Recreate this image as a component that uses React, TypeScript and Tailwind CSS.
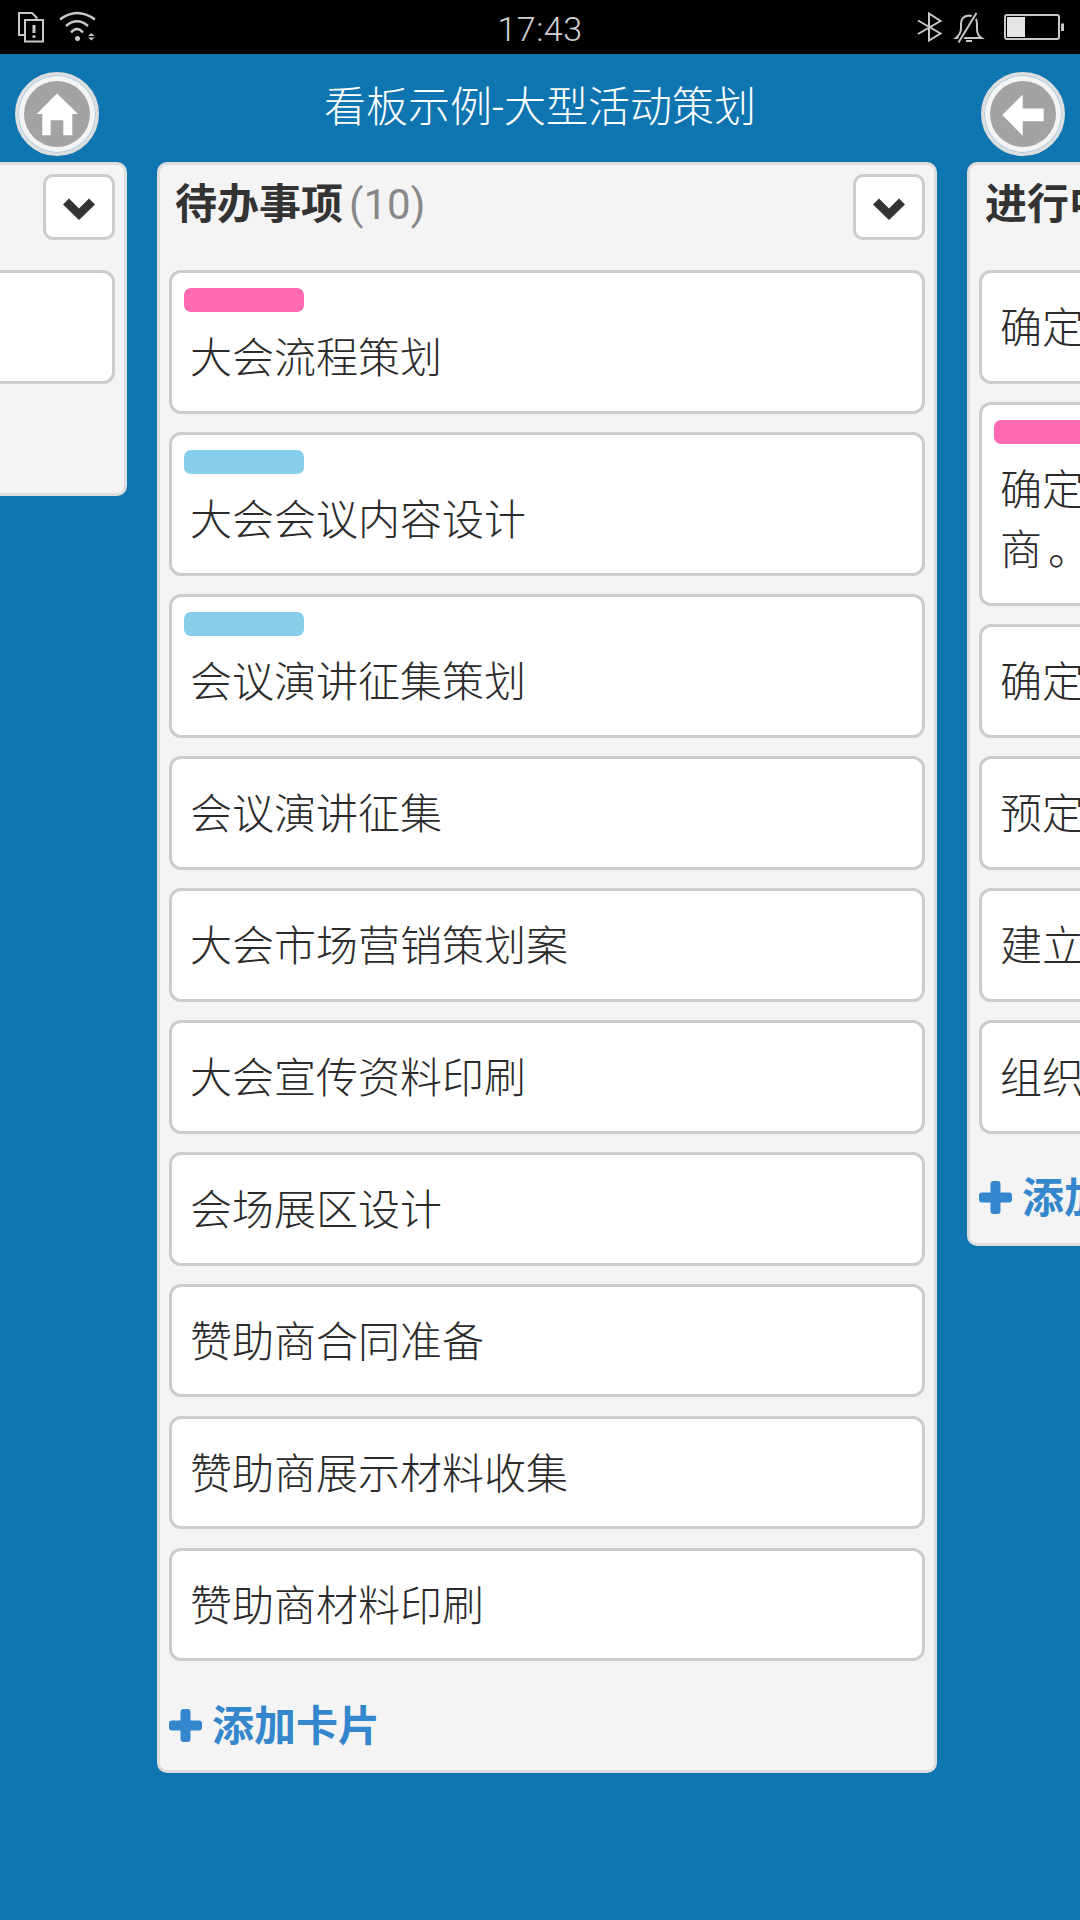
import React from "react";

type CardData = { text?: string; tail?: string; label?: "pink" | "blue" };

const leftCards: CardData[] = [{}];

const midCards: CardData[] = [
  { text: "大会流程策划", label: "pink" },
  { text: "大会会议内容设计", label: "blue" },
  { text: "会议演讲征集策划", label: "blue" },
  { text: "会议演讲征集" },
  { text: "大会市场营销策划案" },
  { text: "大会宣传资料印刷" },
  { text: "会场展区设计" },
  { text: "赞助商合同准备" },
  { text: "赞助商展示材料收集" },
  { text: "赞助商材料印刷" },
];

const rightCards: CardData[] = [
  { text: "确定大会主题" },
  { text: "确定大会场地和活动服务的合作供应商", tail: "。", label: "pink" },
  { text: "确定大会日程" },
  { text: "预定大会场地" },
  { text: "建立大会网站" },
  { text: "组织筹备团队" },
];

function Chevron() {
  return (
    <svg width="32" height="22" viewBox="0 0 32 22" className="mt-[4px] block">
      <path d="M0 6.5 L6 0.5 L16 10.5 L26 0.5 L32 6.5 L16 22 Z" fill="#333333" />
    </svg>
  );
}

function Plus() {
  return (
    <svg width="33" height="33" viewBox="0 0 33 33" className="block shrink-0">
      <path
        d="M11.5 3 Q11.5 0 14.5 0 H18.5 Q21.5 0 21.5 3 V11.5 H30 Q33 11.5 33 14.5 V18.5 Q33 21.5 30 21.5 H21.5 V30 Q21.5 33 18.5 33 H14.5 Q11.5 33 11.5 30 V21.5 H3 Q0 21.5 0 18.5 V14.5 Q0 11.5 3 11.5 H11.5 Z"
        fill="#3587cd"
      />
    </svg>
  );
}

function Card({ text, tail, label }: CardData) {
  return (
    <div
      className={
        "rounded-[12px] border-[3px] border-[#cccccc] bg-white px-[12px] text-[42px] font-light leading-[60px] text-[#2b2b2b] " +
        (label ? "pt-[15px] pb-[23.6px]" : "py-[23.8px]")
      }
    >
      {label && (
        <div
          className={
            "mb-[15px] h-[24px] w-[120px] rounded-[7px] " +
            (label === "pink" ? "bg-[#ff69b4]" : "bg-[#87ceeb]")
          }
        />
      )}
      <div className="min-h-[60px] px-[6px]">
        <div className="relative top-[2px]">
          {text}
          {tail && <span className="pl-[6px]">{tail}</span>}
        </div>
      </div>
    </div>
  );
}

function Column({
  title,
  count,
  cards,
}: {
  title?: string;
  count?: number;
  cards: CardData[];
}) {
  return (
    <div className="w-[780px] shrink-0 self-start rounded-[10px] border-[3px] border-[#dddddd] bg-[#f4f4f4]">
      <div className="flex h-[105px] items-start justify-between pl-[15px] pr-[9px] pt-[9px]">
        <div className="whitespace-nowrap text-[42px] leading-[62px] text-[#333333]">
          <span className="font-bold">{title}</span>
          {count !== undefined && (
            <span className="ml-[6px] text-[#888888]">({count})</span>
          )}
        </div>
        <div className="flex h-[66px] w-[72px] items-center justify-center rounded-[10px] border-[3px] border-[#cccccc] bg-white">
          <Chevron />
        </div>
      </div>
      <div className="flex flex-col gap-[18.4px] px-[9px]">
        {cards.map((c, i) => (
          <Card key={i} {...c} />
        ))}
      </div>
      <div className="mt-[34px] mb-[15px] flex h-[60px] items-center gap-[10px] px-[9px] text-[42px] font-bold text-[#3587cd]">
        <Plus />
        <span className="relative top-[1px]">添加卡片</span>
      </div>
    </div>
  );
}

function RoundButton({ children }: { children: React.ReactNode }) {
  return (
    <div className="flex h-[84px] w-[84px] items-center justify-center rounded-full border-[3px] border-[#dddddd] bg-[#f4f4f4] shadow-[inset_0_0_0_1px_#a9cbe0]">
      <div className="h-[66px] w-[66px] rounded-full bg-[#a3a3a3]">{children}</div>
    </div>
  );
}

function HomeGlyph() {
  return (
    <svg width="66" height="66" viewBox="0 0 66 66" className="block">
      <path
        fillRule="evenodd"
        d="M33 12.6 L54 33 H48.3 V54.3 H39.3 V39.3 H26.7 V54.3 H18.3 V33 H12.7 Z"
        fill="#ffffff"
      />
    </svg>
  );
}

function BackGlyph() {
  return (
    <svg width="66" height="66" viewBox="0 0 66 66" className="block">
      <path
        d="M12.4 34 L32.7 13.4 V27.5 H53.7 V40.3 H32.7 V54.7 Z"
        fill="#ffffff"
      />
    </svg>
  );
}

function StatusLeft() {
  return (
    <svg width="180" height="54" viewBox="0 0 180 54" className="block" fill="none">
      <path d="M24 35 H19 V13 H32 L36.5 17.5 V19" stroke="#c8c8c8" strokeWidth="2" />
      <rect x="25" y="20" width="18" height="21.5" stroke="#c8c8c8" strokeWidth="2" />
      <path d="M34 25 V33" stroke="#c8c8c8" strokeWidth="3" />
      <circle cx="34" cy="36.5" r="1.6" fill="#c8c8c8" />
      <path d="M60 19.5 Q77 6.5 95 19.5" stroke="#c8c8c8" strokeWidth="2.4" />
      <path d="M66 26 Q77 16.5 88 26" stroke="#c8c8c8" strokeWidth="2.4" />
      <path d="M71 32.5 Q77 25.5 83 32.5" stroke="#c8c8c8" strokeWidth="2.4" />
      <circle cx="77.5" cy="38.5" r="2.5" fill="#c8c8c8" />
      <path d="M88 36 L91.3 33 L94.6 36 Z" fill="#c8c8c8" />
      <path d="M88 37.5 H94.6 L91.3 40.5 Z" fill="#c8c8c8" />
    </svg>
  );
}

function StatusRight() {
  return (
    <svg width="180" height="54" viewBox="900 0 180 54" className="block" fill="none">
      <path
        d="M918 20.5 L940.5 33.5 L929 40.5 V13.5 L940.5 21 L918 34"
        stroke="#c8c8c8"
        strokeWidth="2"
      />
      <path
        d="M956 38 Q961 34 961 28 V24 Q961 16 969 15.5 Q977 16 977 24 V29 Q977 35 981.5 38 Z"
        stroke="#c8c8c8"
        strokeWidth="2"
      />
      <path d="M976.5 13 L958.5 42.5" stroke="#000000" strokeWidth="5" />
      <path d="M976.5 13 L958.5 42.5" stroke="#c8c8c8" strokeWidth="2" />
      <path d="M966 41 H972" stroke="#c8c8c8" strokeWidth="2" />
      <rect x="1005" y="15" width="54" height="24" rx="2" stroke="#c8c8c8" strokeWidth="2" />
      <rect x="1007" y="17" width="18" height="20" fill="#e5e5e5" />
      <rect x="1061" y="23.5" width="3" height="7.5" fill="#c8c8c8" />
    </svg>
  );
}

export default function App() {
  return (
    <div className="h-[1920px] w-[1080px] overflow-hidden bg-[#0e75b1] font-[Roboto,'Noto_Sans_CJK_SC',sans-serif]">
      <div className="grid h-[54px] grid-cols-[180px_1fr_180px] items-center bg-black">
        <StatusLeft />
        <div className="pt-[4px] text-center text-[34px] font-light leading-[50px] tracking-[0.5px] text-[#d0d0d0]">
          17:43
        </div>
        <StatusRight />
      </div>

      <div className="flex h-[108px] items-start justify-between pl-[15px] pr-[15px] pt-[18px]">
        <RoundButton>
          <HomeGlyph />
        </RoundButton>
        <div className="pt-[5px] text-[42px] font-light leading-[62px] text-white">看板示例-大型活动策划</div>
        <RoundButton>
          <BackGlyph />
        </RoundButton>
      </div>

      <div className="ml-[-653px] flex w-[2400px] gap-[30px]">
        <Column cards={leftCards} />
        <Column title="待办事项" count={10} cards={midCards} />
        <Column title="进行中" cards={rightCards} />
      </div>
    </div>
  );
}
